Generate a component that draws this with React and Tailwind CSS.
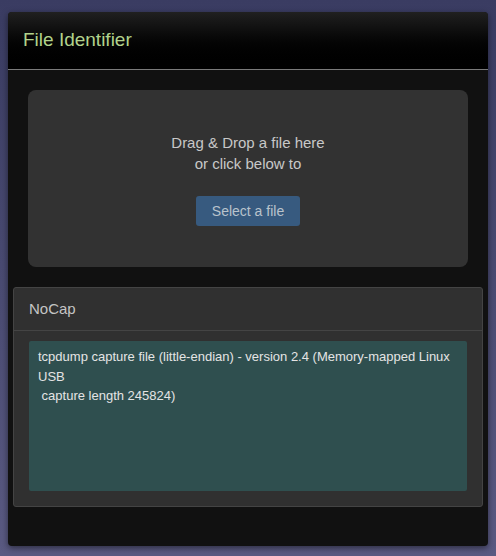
import React from "react";

const App = () => {
  return (
    <div className="min-h-[556px] bg-gradient-to-b from-[#3a3c62] to-[#5a5a82] pt-3 pb-[10px] px-2 font-['Liberation_Sans',Arial,sans-serif]">
      <div className="flex h-[534px] flex-col overflow-hidden rounded bg-[#111111] shadow-[0_2px_6px_rgba(0,0,0,0.5)]">
        <div className="h-[58px] shrink-0 border-b border-[#7a7a7a] bg-gradient-to-b from-[#202020] to-[#000000] px-[15px] pt-[17px]">
          <h1 className="text-[19px] leading-[22px] text-[#b2d38c]">File Identifier</h1>
        </div>

        <div className="px-5 pt-5">
          <div className="flex h-[177px] flex-col items-center rounded-lg bg-[#323232] pt-[42px]">
            <p className="text-center text-[15px] leading-[21px] text-[#c8c8c8]">
              Drag &amp; Drop a file here
              <br />
              or click below to
            </p>
            <button className="mt-[22px] h-[30px] w-[104px] rounded-[3px] bg-[#375a7f] text-[14px] text-[#b9c3cc]">
              Select a file
            </button>
          </div>
        </div>

        <div className="mx-[5px] mt-5 rounded-[3px] border border-[#444444] bg-[#303030]">
          <div className="h-[43px] border-b border-[#444444] px-[15px] pt-[11px] text-[15px] leading-[20px] text-[#c4c4c4]">
            NoCap
          </div>
          <div className="p-[15px] pt-[10px]">
            <div className="h-[150px] rounded-[2px] bg-[#2f4f4f] px-[9px] pt-[6px] text-[13px] leading-[19.5px] text-[#e4e4e4]">
              tcpdump capture file (little-endian) - version 2.4 (Memory-mapped Linux USB
              <br />
              &nbsp;capture length 245824)
            </div>
          </div>
        </div>
      </div>
    </div>
  );
};

export default App;
